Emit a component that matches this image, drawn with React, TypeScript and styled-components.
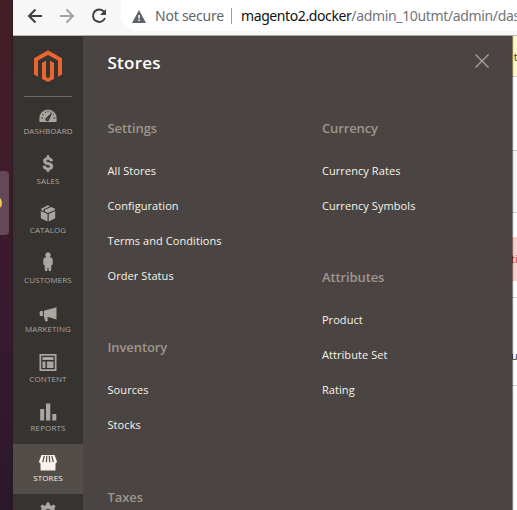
import React from "react";
import styled, { createGlobalStyle } from "styled-components";

const GlobalStyle = createGlobalStyle`
  * { box-sizing: border-box; }
  body { margin: 0; overflow: hidden; font-family: "Open Sans", "Noto Sans", sans-serif; }
`;

const Desktop = styled.div`
  display: flex;
  width: 517px;
  height: 510px;
  overflow: hidden;
  background: #fff;
`;

const Dock = styled.div`
  flex: 0 0 13px;
  padding-top: 171px;
  background: linear-gradient(#451f26 0, #421d29 100px, #3c1a2d 240px, #321a2e 400px, #2b172a 510px);
  border-right: 1px solid #2b1820;
`;

const DockTile = styled.div`
  width: 9px;
  height: 64px;
  padding-top: 25px;
  overflow: hidden;
  background: #654858;
  border-radius: 0 4px 4px 0;
`;

const DockApp = styled.div`
  width: 14px;
  height: 14px;
  margin-left: -12.5px;
  border-radius: 50%;
  background: #f7c84e;
`;

const Browser = styled.div`
  flex: 0 0 504px;
  display: flex;
  flex-direction: column;
`;

const Toolbar = styled.div`
  flex: 0 0 36px;
  display: flex;
  background: #f7f7f8;
  border-bottom: 1px solid #b9b8b7;
  overflow: hidden;
`;

const NavButtons = styled.svg`
  flex: 0 0 108px;
  height: 35px;
  fill: none;
`;

const AddressBar = styled.div`
  flex: 0 0 420px;
  height: 31px;
  display: flex;
  align-items: center;
  background: #fff;
  border-radius: 0 0 0 16px;
  font: 14px/30px "Noto Sans", "Open Sans", sans-serif;
  white-space: nowrap;
`;

const Warning = styled.svg`
  flex: 0 0 14px;
  height: 13px;
  margin: 1px 0 0 11px;
`;

const Security = styled.span`
  width: 76px;
  margin-left: 9px;
  color: #5f6368;
  letter-spacing: -0.23px;
`;

const Divider = styled.i`
  width: 1px;
  height: 16px;
  margin-top: 1px;
  background: #9b9da0;
`;

const Url = styled.span`
  margin-left: 9px;
  color: #737578;
  letter-spacing: -0.35px;
`;

const Host = styled.span`
  color: #111;
  letter-spacing: -0.4px;
`;

const Body = styled.div`
  flex: 1;
  display: flex;
  min-height: 0;
`;

const Sidebar = styled.nav`
  flex: 0 0 70px;
  background: #373330;
  overflow: hidden;
`;

const Brand = styled.div`
  height: 61px;
  margin: 0 11px;
  padding: 14px 0 0 10px;
  border-bottom: 1px solid #736963;
`;

const NavItem = styled.div<{ $active?: boolean }>`
  height: ${(p) => (p.$active ? 50 : 49.5)}px;
  display: flex;
  flex-direction: column;
  align-items: center;
  padding-top: 8px;
  color: ${(p) => (p.$active ? "#f7f3eb" : "#aaa6a0")};
  background: ${(p) => (p.$active ? "#524d49" : "transparent")};
`;

const NavIcon = styled.svg`
  flex: 0 0 22px;
  width: 22px;
  fill: currentColor;
  overflow: visible;
`;

const NavLabel = styled.span`
  margin-top: -2px;
  font-size: 8px;
  line-height: 12px;
  letter-spacing: 0.1px;
  white-space: nowrap;
`;

const Submenu = styled.section`
  flex: 0 0 429px;
  padding: 14px 20px 0 24.5px;
  background: #4a4542;
  overflow: hidden;
  z-index: 1;
  box-shadow: 1px 0 1px rgba(0, 0, 0, 0.5);
`;

const SubmenuHeader = styled.header`
  height: 68px;
  display: flex;
  justify-content: space-between;
`;

const Title = styled.h1`
  margin: 0;
  font-size: 17px;
  line-height: 26px;
  font-weight: 600;
  letter-spacing: 0.25px;
  color: #fff;
`;

const Close = styled.svg`
  width: 20px;
  height: 20px;
  stroke: #aaa39d;
  stroke-width: 1.3;
`;

const Columns = styled.div`
  display: grid;
  grid-template-columns: 214.4px 170px;
`;

const Group = styled.div<{ $height: number }>`
  height: ${(p) => p.$height}px;
`;

const GroupTitle = styled.h2`
  margin: 0 0 25px;
  font-size: 13px;
  line-height: 20px;
  font-weight: 600;
  letter-spacing: -0.1px;
  color: #9f958f;
`;

const Entry = styled.div`
  height: 35.1px;
  font-size: 11px;
  line-height: 16px;
  letter-spacing: 0.08px;
  color: #f7f3eb;
  white-space: nowrap;
`;

const Page = styled.main`
  flex: 0 0 5px;
  overflow: hidden;
  background: #fff;
`;

const Band = styled.div<{ $height: number; $fill: string; $line?: boolean; $ink?: string; $drop?: number }>`
  height: ${(p) => p.$height}px;
  padding-top: ${(p) => p.$drop || 0}px;
  background: ${(p) => p.$fill};
  border-bottom: ${(p) => (p.$line ? "1px solid #ccc" : "0")};
  color: ${(p) => p.$ink || "#41362f"};
  font-size: 11px;
  line-height: ${(p) => p.$height - (p.$drop || 0)}px;
  text-indent: -1px;
  white-space: nowrap;
`;

const icons: Record<string, React.ReactNode> = {
  dashboard: (
    <>
      <path d="M2.4 17v-4a8.6 8.6 0 0 1 17.2 0v4z" />
      <path d="M4.2 13h2M5.3 9.2l1.5 1M8 6.5l.8 1.5M11 5.6v1.6M14 6.5l-.5 1M16.2 13h2M17 9.6l-1 .5" stroke="#373330" strokeWidth="1" />
      <path d="m15.4 7.1-6 5.5a2 2 0 1 0 2.8 2.5z" fill="#373330" />
      <circle cx="11" cy="13.8" r=".6" />
    </>
  ),
  sales: (
    <path stroke="currentColor" strokeWidth=".7" d="M10 3h2v2c2 .3 3.4 1.5 3.7 3.4h-2.6C12.900 7.500 12.200 7 11 7c-1.300 0-2 .6-2 1.300 0 .9.9 1.200 2.600 1.600 2.600.6 4.300 1.500 4.300 3.900 0 2-1.500 3.200-3.900 3.500V19h-2v-1.700c-2.400-.3-3.900-1.700-4-3.900h2.700c.1 1.200 1 1.900 2.500 1.900 1.300 0 2.100-.5 2.100-1.400 0-1-.9-1.400-2.600-1.800-2.500-.6-4.200-1.500-4.200-3.800C6.500 6.500 7.900 5.300 10 5z" />
  ),
  catalog: (
    <path d="M3.800 8.600 10.500 11.600v7.400l-6.700-3.200zM11.700 11.600l6.500-3v7.200L11.700 19zM10.800 2.800l2.300 1-6.400 2.900v2l-2.500-1.200V6.200zM14.300 4.400 18 6.200v1.200l-6.900 3.200-3.200-1.400V7.300z" />
  ),
  customers: (
    <path d="M11 1a2.800 2.800 0 0 1 2.200 4.400l-.3.600c1.800.2 2.800 1 2.800 2.700v4.500l-1.300.6-.4 5.900h-2.100L11 15.300l-.9 4.400H8l-.4-5.900-1.300-.6V8.700c0-1.700 1-2.500 2.800-2.700l-.3-.6A2.800 2.800 0 0 1 11 1z" />
  ),
  marketing: (
    <path d="M4 6.600h1.900v5.200H4c-1.200 0-1.400-1-1.400-2.600S2.800 6.600 4 6.600zm2.900-.1L19.500 3v12.200L13 13.300l-2.600-.5.4 4-2.300.4-1.600-5z" />
  ),
  content: (
    <path fillRule="evenodd" d="M2.500 2.500h17v17h-17zM4.200 4.200v13.600h13.600V4.200zM5.500 5.500h11v3h-11zM5.500 10h3v6.500h-3zM10 10h6.500v6.500H10z" />
  ),
  reports: <path d="M3.200 8h4v11.500h-4zM9 2.500h4.300v17H9zM15.300 13h4v6.500h-4z" />,
  stores: (
    <>
      <path d="M4.500 3.500h13l2.500 6.500a2.500 2.500 0 0 1-1.500 2.100V19h-15v-6.900A2.500 2.500 0 0 1 2 10z" />
      <path d="m7.300 4.300-1.500 6.400M9.800 4.300l-.4 6.400M12.300 4.300l.4 6.400M14.800 4.300l1.500 6.400" stroke="#524d49" strokeWidth="1.200" />
    </>
  ),
  system: (
    <path d="m9.700 1.500 2.600 0 .6 2.400 1.600.7 2.200-1.300 1.900 1.900-1.300 2.200.7 1.600 2.500.7v2.600l-2.500.7-.7 1.600 1.300 2.200-1.900 1.900-2.200-1.300-1.600.7-.6 2.400H9.700l-.6-2.400-1.600-.7-2.200 1.300-1.900-1.900 1.300-2.200-.7-1.600-2.500-.7V9.700L4 9l.7-1.600-1.300-2.200 1.900-1.900 2.200 1.300 1.600-.7zM11 7.800a3.200 3.200 0 1 0 0 6.400 3.200 3.200 0 0 0 0-6.400z" fillRule="evenodd" />
  ),
};

// Icon name, caption, and the vertical origin of the icon's view box.
const nav: [string, string, number][] = [
  ["dashboard", "DASHBOARD", 0],
  ["sales", "SALES", 2.4],
  ["catalog", "CATALOG", 1.5],
  ["customers", "CUSTOMERS", 2.8],
  ["marketing", "MARKETING", -1.3],
  ["content", "CONTENT", 1.5],
  ["reports", "REPORTS", 1],
  ["stores", "STORES", 0.5],
  ["system", "", 0.9],
];

interface MenuGroup { title: string; height: number; entries: string[] }

const columns: MenuGroup[][] = [
  [
    { title: "Settings", height: 219, entries: ["All Stores", "Configuration", "Terms and Conditions", "Order Status"] },
    { title: "Inventory", height: 150, entries: ["Sources", "Stocks"] },
    { title: "Taxes", height: 60, entries: [] },
  ],
  [
    { title: "Currency", height: 149, entries: ["Currency Rates", "Currency Symbols"] },
    { title: "Attributes", height: 180, entries: ["Product", "Attribute Set", "Rating"] },
  ],
];

export default function App() {
  return (
    <Desktop>
      <GlobalStyle />
      <Dock><DockTile><DockApp /></DockTile></Dock>
      <Browser>
        <Toolbar>
          <NavButtons viewBox="0 0 108 35" strokeWidth="2">
            <path d="M29 16H16m6.500-6.500L16 16l6.500 6.500" stroke="#3e4043" />
            <path d="M47 16h13m-6.500-6.500L60 16l-6.500 6.500" stroke="#a3a4a6" />
            <path d="M91.200 12A6.200 6.200 0 1 0 92 18" stroke="#3e4043" />
            <path d="M93 9v6h-6z" fill="#3e4043" />
          </NavButtons>
          <AddressBar>
            <Warning viewBox="0 0 14 13">
              <path d="M7 0 14 13H0z" fill="#5f6368" />
              <path d="M6.300 5h1.500v3.500H6.300zm0 4.500h1.500V11H6.300z" fill="#fff" />
            </Warning>
            <Security>Not secure</Security>
            <Divider />
            <Url><Host>magento2.docker</Host>/admin_10utmt/admin/das</Url>
          </AddressBar>
        </Toolbar>
        <Body>
          <Sidebar>
            <Brand>
              <svg width="28" height="32" viewBox="0 0 28 32" fill="#e8652d">
                <path d="M14 .3 28 8.300v16.200l-4 2.300V10.600L14 4.900 4 10.600v16.200l-4-2.300V8.300z" />
                <path d="m8 12.900 4-2.300v16.200l2 1.200 2-1.200V10.600l4 2.300v16.200L14 32 8 29.100z" />
              </svg>
            </Brand>
            {nav.map(([icon, label, top]) => (
              <NavItem key={icon} $active={icon === "stores"}>
                <NavIcon viewBox={`0 ${top} 22 22`}>{icons[icon]}</NavIcon>
                {label && <NavLabel>{label}</NavLabel>}
              </NavItem>
            ))}
          </Sidebar>
          <Submenu>
            <SubmenuHeader>
              <Title>Stores</Title>
              <Close viewBox="0 0 20 20"><path d="m3.500 4.500 13 13m0-13-13 13" /></Close>
            </SubmenuHeader>
            <Columns>
              {columns.map((groups, i) => (
                <div key={i}>
                  {groups.map((group) => (
                    <Group key={group.title} $height={group.height}>
                      <GroupTitle>{group.title}</GroupTitle>
                      {group.entries.map((entry) => <Entry key={entry}>{entry}</Entry>)}
                    </Group>
                  ))}
                </div>
              ))}
            </Columns>
          </Submenu>
          <Page>
            <Band $height={41} $fill="#fffbbb" $line>&nbsp;t</Band>
            <Band $height={74} $fill="#fff" $line />
            <Band $height={62} $fill="#f5f5f5" $line />
            <Band $height={24} $fill="#fff" />
            <Band $height={44} $fill="#ffcccc" $ink="#d43b2a">ti</Band>
            <Band $height={17} $fill="#fff" $line />
            <Band $height={88} $fill="#fff" $line $drop={28}>ur</Band>
          </Page>
        </Body>
      </Browser>
    </Desktop>
  );
}
